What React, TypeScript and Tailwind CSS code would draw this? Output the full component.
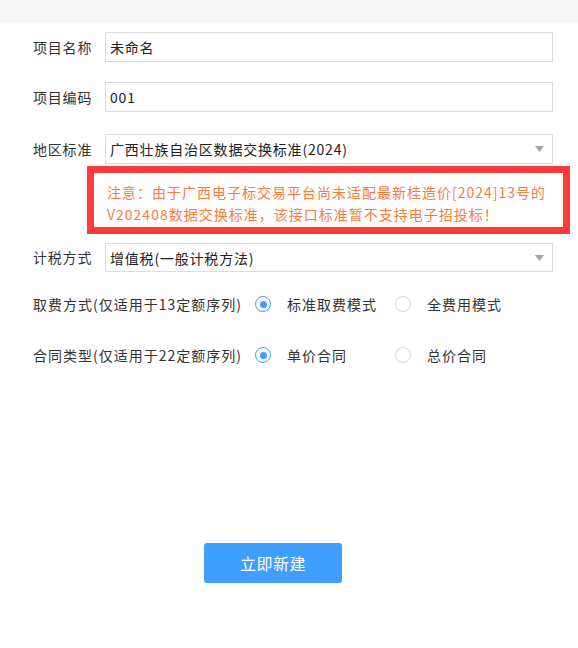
import React from 'react';

const font = { fontFamily: '"Noto Sans CJK SC", "Noto Sans", sans-serif' };

function Field({ label, value, select, h = 'h-[30px]' }: { label: string; value: string; select?: boolean; h?: string }) {
  return (
    <div className={`flex items-center ${h}`}>
      <div className="w-[72px] shrink-0 text-[14px] tracking-[0.8px] text-[#333]">{label}</div>
      <div className={`flex-1 ${h} border border-[#dcdcdc] bg-white flex items-center pl-[4px] pr-[8px]`}>
        <span className="flex-1 text-[14px] tracking-[0.8px] text-[#222] leading-none">{value}</span>
        {select && (
          <svg width="9" height="6" viewBox="0 0 9 6">
            <path d="M0 0h9L4.5 6z" fill="#a3a3a3" />
          </svg>
        )}
      </div>
    </div>
  );
}

function Radio({ checked, label }: { checked?: boolean; label: string }) {
  return (
    <div className="w-[140px] flex items-center">
      <span
        className={`w-[16px] h-[16px] rounded-full border flex items-center justify-center ${
          checked ? 'border-[#409eff]' : 'border-[#d4d7de]'
        }`}
      >
        {checked && <span className="w-[7px] h-[7px] rounded-full bg-[#409eff]" />}
      </span>
      <span className="ml-[16px] text-[14px] tracking-[1px] text-[#333]">{label}</span>
    </div>
  );
}

export default function App() {
  return (
    <div className="w-[578px] h-[648px] bg-white relative overflow-hidden" style={font}>
      {/* header strip */}
      <div className="h-[23px] bg-[#f7f7f7]" />

      <div className="pl-[33px] pr-[25px] pt-[9px]">
        <Field label="项目名称" value="未命名" />
        <div className="mt-[20px]">
          <Field label="项目编码" value="001" />
        </div>
        <div className="mt-[22px]">
          <Field label="地区标准" value="广西壮族自治区数据交换标准(2024)" select />
        </div>

        {/* warning */}
        <div className="mt-[17px] pl-[74px] text-[14px] tracking-[1px] leading-[22px] text-[#fa7b3c]">
          <div>注意：由于广西电子标交易平台尚未适配最新桂造价[2024]13号的</div>
          <div>V202408数据交换标准，该接口标准暂不支持电子招投标！</div>
        </div>

        <div className="mt-[18px]">
          <Field label="计税方式" value="增值税(一般计税方法)" select h="h-[29px]" />
        </div>

        <div className="mt-[22px] flex items-center h-[20px]">
          <div className="w-[222px] shrink-0 text-[14px] tracking-[1px] text-[#333]">取费方式(仅适用于13定额序列)</div>
          <Radio checked label="标准取费模式" />
          <Radio label="全费用模式" />
        </div>
        <div className="mt-[31px] flex items-center h-[20px]">
          <div className="w-[222px] shrink-0 text-[14px] tracking-[1px] text-[#333]">合同类型(仅适用于22定额序列)</div>
          <Radio checked label="单价合同" />
          <Radio label="总价合同" />
        </div>
      </div>

      <div className="mt-[178px] ml-[204px] w-[138px] h-[40px] rounded-[3px] bg-[#409eff] flex items-center justify-center text-white text-[16px] tracking-[0.5px]">
        立即新建
      </div>

      {/* red annotation frame */}
      <div className="absolute left-[87px] top-[166px] w-[483px] h-[68px] border-[7px] border-[#ff3a3a]" />
    </div>
  );
}
